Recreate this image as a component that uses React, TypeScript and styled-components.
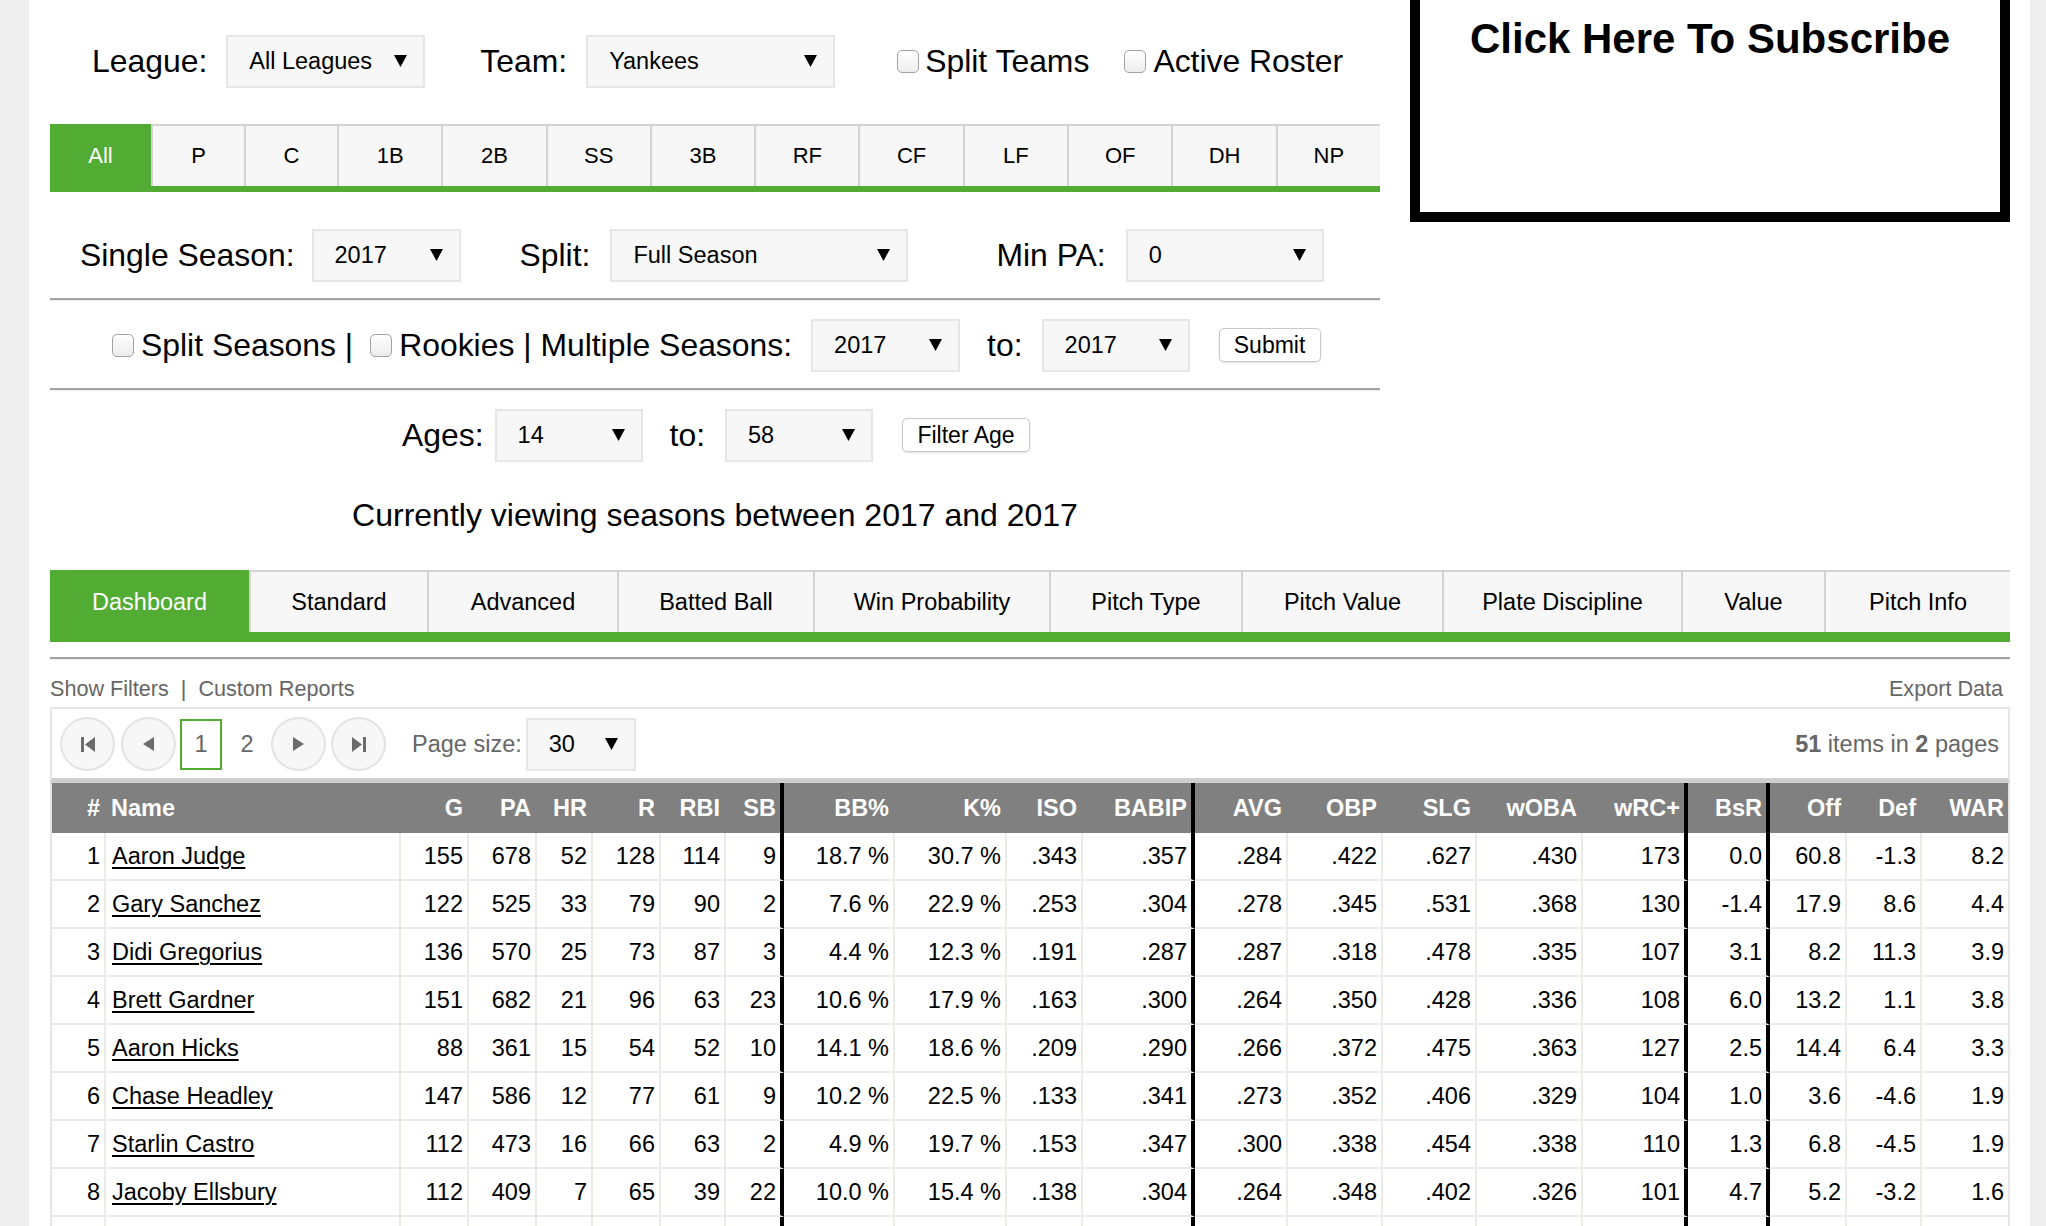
import React from 'react';
import styled, { createGlobalStyle } from 'styled-components';

const GREEN = '#52ab33';

const GlobalStyle = createGlobalStyle`
  html, body { margin: 0; padding: 0; background: #efefef; overflow: hidden; }
  body { font-family: "Liberation Sans", Arial, Helvetica, sans-serif; color: #000; }
  * { box-sizing: border-box; }
`;

const Page = styled.div`
  margin-left: 29px;
  width: 2001px;
  height: 1226px;
  overflow: hidden;
  background: #fff;
  padding: 0 20px 0 21px;
`;

const Top = styled.div`
  display: flex;
  align-items: flex-start;
  gap: 30px;
`;

const FilterColumn = styled.div`
  width: 1330px;
  display: flex;
  flex-direction: column;
`;

const FieldRow = styled.div<{ $mt: number; $pl: number }>`
  display: flex;
  align-items: center;
  height: 54px;
  margin-top: ${p => p.$mt}px;
  padding-left: ${p => p.$pl}px;
`;

const Label = styled.span<{ $ml?: number }>`
  font-size: 31.9px;
  line-height: 1.15;
  white-space: nowrap;
  margin-left: ${p => p.$ml ?? 0}px;
`;

const SelectBox = styled.div<{ $w: number; $ml?: number }>`
  flex-shrink: 0;
  width: ${p => p.$w}px;
  height: 53px;
  margin-left: ${p => p.$ml ?? 0}px;
  border: 2px solid #e6e6e6;
  background: #f7f7f7;
  display: flex;
  align-items: center;
  justify-content: space-between;
  padding: 0 16px 0 21px;
  font-size: 23.5px;
  color: #000;
  white-space: nowrap;
`;

const CheckBox = styled.span<{ $ml?: number }>`
  flex-shrink: 0;
  display: inline-block;
  width: 22px;
  height: 23px;
  margin-left: ${p => p.$ml ?? 0}px;
  border: 1px solid #a3a3a3;
  border-radius: 5px;
  background: linear-gradient(#ffffff, #ececec);
`;

const Button = styled.button<{ $w: number; $ml?: number }>`
  flex-shrink: 0;
  width: ${p => p.$w}px;
  height: 34px;
  margin-left: ${p => p.$ml ?? 0}px;
  padding: 0;
  background: #fff;
  border: 1px solid #c9c9c9;
  border-radius: 5px;
  box-shadow: 0 1px 2px rgba(0, 0, 0, 0.12);
  font-family: inherit;
  font-size: 23px;
  color: #000;
`;

const Rule = styled.div<{ $mt: number }>`
  margin-top: ${p => p.$mt}px;
  height: 3px;
  border-top: 2px solid #a2a2a2;
  border-bottom: 1px solid #ececec;
`;

const ViewingText = styled.div`
  margin-top: 33px;
  height: 40px;
  line-height: 40px;
  text-align: center;
  font-size: 32px;
`;

const SubscribeBox = styled.a`
  flex-shrink: 0;
  width: 600px;
  height: 222px;
  border: 10px solid #000;
  border-top: 0;
  padding-top: 18px;
  display: flex;
  justify-content: center;
  font-size: 42px;
  line-height: 42px;
  font-weight: bold;
  color: #000;
  text-decoration: none;
`;

const PosTabBar = styled.nav`
  display: flex;
  margin-top: 36px;
  height: 68px;
  border-bottom: 6px solid ${GREEN};
  background: #f7f7f7;
`;

const PosTab = styled.a<{ $active?: boolean; $w?: number }>`
  flex: ${p => (p.$w ? `0 0 ${p.$w}px` : '1 1 0')};
  display: flex;
  align-items: center;
  justify-content: center;
  border-top: 2px solid ${p => (p.$active ? GREEN : '#d3d3d3')};
  border-left: 2px solid #d3d3d3;
  &:first-child { border-left: 0; }
  background: ${p => (p.$active ? GREEN : '#f7f7f7')};
  color: ${p => (p.$active ? '#fff' : '#000')};
  font-size: 22px;
  text-decoration: none;
`;

const StatTabBar = styled.nav`
  display: flex;
  margin-top: 35px;
  height: 72px;
  border-bottom: 10px solid ${GREEN};
  background: #f7f7f7;
`;

const StatTab = styled.a<{ $active?: boolean; $w: number }>`
  flex: 0 0 ${p => p.$w}px;
  display: flex;
  align-items: center;
  justify-content: center;
  border-top: 2px solid ${p => (p.$active ? GREEN : '#d3d3d3')};
  border-left: 2px solid #d3d3d3;
  &:first-child { border-left: 0; }
  background: ${p => (p.$active ? GREEN : '#f7f7f7')};
  color: ${p => (p.$active ? '#fff' : '#000')};
  font-size: 23.5px;
  text-decoration: none;
  white-space: nowrap;
`;

const ToolsRow = styled.div`
  margin-top: 17px;
  display: flex;
  justify-content: space-between;
  padding-right: 7px;
  font-size: 21.6px;
  line-height: 24px;
  color: #666;
`;

const ToolGroup = styled.div`
  display: flex;
`;

const ToolLink = styled.a`
  color: #666;
  text-decoration: none;
`;

const ToolSep = styled.span`
  margin: 0 12px;
`;

const PagerBar = styled.div`
  margin-top: 6px;
  border: 2px solid #e6e6e6;
  border-bottom: 5px solid #cfcfcf;
  padding: 8px 9px 7px 8px;
  display: flex;
  align-items: center;
  justify-content: space-between;
`;

const PagerGroup = styled.div`
  display: flex;
  align-items: center;
`;

const CircleButton = styled.a<{ $ml?: number }>`
  flex-shrink: 0;
  width: 55px;
  height: 54px;
  margin-left: ${p => p.$ml ?? 0}px;
  border: 2px solid #e3e3e3;
  border-radius: 50%;
  background: #f7f7f7;
  display: flex;
  align-items: center;
  justify-content: center;
`;

const PageNum = styled.a<{ $active?: boolean; $ml?: number }>`
  flex-shrink: 0;
  width: 42px;
  height: 51px;
  margin-left: ${p => p.$ml ?? 0}px;
  border: 2px solid ${p => (p.$active ? GREEN : 'transparent')};
  display: flex;
  align-items: center;
  justify-content: center;
  font-size: 23.5px;
  color: #666;
  text-decoration: none;
`;

const PagerText = styled.span<{ $ml?: number }>`
  margin-left: ${p => p.$ml ?? 0}px;
  font-size: 23.5px;
  color: #666;
  white-space: nowrap;
`;

const DataTable = styled.div`
  border-left: 2px solid #e6e6e6;
  border-right: 2px solid #e6e6e6;
`;

type Col = { key: string; w: number; thick?: boolean; last?: boolean; align?: 'left' | 'right' };

const COLS: Col[] = [
  { key: '#', w: 54 },
  { key: 'Name', w: 295, align: 'left' },
  { key: 'G', w: 68 },
  { key: 'PA', w: 68 },
  { key: 'HR', w: 56 },
  { key: 'R', w: 68 },
  { key: 'RBI', w: 65 },
  { key: 'SB', w: 58, thick: true },
  { key: 'BB%', w: 111 },
  { key: 'K%', w: 112 },
  { key: 'ISO', w: 76 },
  { key: 'BABIP', w: 112, thick: true },
  { key: 'AVG', w: 93 },
  { key: 'OBP', w: 95 },
  { key: 'SLG', w: 94 },
  { key: 'wOBA', w: 106 },
  { key: 'wRC+', w: 105, thick: true },
  { key: 'BsR', w: 82, thick: true },
  { key: 'Off', w: 77 },
  { key: 'Def', w: 75 },
  { key: 'WAR', w: 86, last: true },
];

const GridRow = styled.div`
  display: grid;
  grid-template-columns: ${COLS.map(c => `${c.w}px`).join(' ')};
`;

const HeadCell = styled.div<{ $thick?: boolean; $last?: boolean; $align?: string }>`
  height: 50px;
  line-height: 50px;
  background: #808080;
  color: #fff;
  font-weight: bold;
  font-size: 23.5px;
  white-space: nowrap;
  text-align: ${p => p.$align ?? 'right'};
  padding: 0 4px 0 5px;
  border-right: ${p => (p.$last ? '0' : p.$thick ? '4px solid #000' : '2px solid transparent')};
`;

const Cell = styled.div<{ $thick?: boolean; $last?: boolean; $align?: string }>`
  height: 48px;
  line-height: 47px;
  font-size: 23.5px;
  white-space: nowrap;
  overflow: hidden;
  text-align: ${p => p.$align ?? 'right'};
  padding: 0 4px 0 6px;
  border-bottom: 2px solid #ebebe5;
  border-right: ${p => (p.$last ? '0' : p.$thick ? '4px solid #000' : '2px solid #ebebe5')};
  background: #fff;
`;

const PlayerLink = styled.a`
  color: #000;
  text-decoration: underline;
  text-decoration-thickness: 2px;
  text-underline-offset: 3px;
`;

const Caret = () => (
  <svg width="13" height="12" viewBox="0 0 13 12">
    <polygon points="0,0 13,0 6.5,12" fill="#000" />
  </svg>
);

type PagerIconKind = 'first' | 'prev' | 'next' | 'last';
const PagerIcon = ({ kind }: { kind: PagerIconKind }) => {
  const c = '#6b6b6b';
  if (kind === 'first')
    return (
      <svg width="14" height="15" viewBox="0 0 14 15">
        <rect x="0" y="0" width="3" height="15" fill={c} />
        <polygon points="14,0 14,15 4,7.5" fill={c} />
      </svg>
    );
  if (kind === 'prev')
    return (
      <svg width="11" height="14" viewBox="0 0 11 14">
        <polygon points="11,0 11,14 0,7" fill={c} />
      </svg>
    );
  if (kind === 'next')
    return (
      <svg width="11" height="14" viewBox="0 0 11 14">
        <polygon points="0,0 0,14 11,7" fill={c} />
      </svg>
    );
  return (
    <svg width="14" height="15" viewBox="0 0 14 15">
      <polygon points="0,0 0,15 10,7.5" fill={c} />
      <rect x="11" y="0" width="3" height="15" fill={c} />
    </svg>
  );
};

const Select = ({ value, w, ml }: { value: string; w: number; ml?: number }) => (
  <SelectBox $w={w} $ml={ml}>
    <span>{value}</span>
    <Caret />
  </SelectBox>
);

type Row = (string | number)[];
const ROWS: Row[] = [
  [1, 'Aaron Judge', 155, 678, 52, 128, 114, 9, '18.7 %', '30.7 %', '.343', '.357', '.284', '.422', '.627', '.430', 173, '0.0', '60.8', '-1.3', '8.2'],
  [2, 'Gary Sanchez', 122, 525, 33, 79, 90, 2, '7.6 %', '22.9 %', '.253', '.304', '.278', '.345', '.531', '.368', 130, '-1.4', '17.9', '8.6', '4.4'],
  [3, 'Didi Gregorius', 136, 570, 25, 73, 87, 3, '4.4 %', '12.3 %', '.191', '.287', '.287', '.318', '.478', '.335', 107, '3.1', '8.2', '11.3', '3.9'],
  [4, 'Brett Gardner', 151, 682, 21, 96, 63, 23, '10.6 %', '17.9 %', '.163', '.300', '.264', '.350', '.428', '.336', 108, '6.0', '13.2', '1.1', '3.8'],
  [5, 'Aaron Hicks', 88, 361, 15, 54, 52, 10, '14.1 %', '18.6 %', '.209', '.290', '.266', '.372', '.475', '.363', 127, '2.5', '14.4', '6.4', '3.3'],
  [6, 'Chase Headley', 147, 586, 12, 77, 61, 9, '10.2 %', '22.5 %', '.133', '.341', '.273', '.352', '.406', '.329', 104, '1.0', '3.6', '-4.6', '1.9'],
  [7, 'Starlin Castro', 112, 473, 16, 66, 63, 2, '4.9 %', '19.7 %', '.153', '.347', '.300', '.338', '.454', '.338', 110, '1.3', '6.8', '-4.5', '1.9'],
  [8, 'Jacoby Ellsbury', 112, 409, 7, 65, 39, 22, '10.0 %', '15.4 %', '.138', '.304', '.264', '.348', '.402', '.326', 101, '4.7', '5.2', '-3.2', '1.6'],
  COLS.map(() => ''),
];

const POSITIONS = ['All', 'P', 'C', '1B', '2B', 'SS', '3B', 'RF', 'CF', 'LF', 'OF', 'DH', 'NP'];
const POS_WIDTHS: Record<string, number> = { All: 101, P: 93, C: 93 };

const STAT_TABS: [string, number][] = [
  ['Dashboard', 199],
  ['Standard', 178],
  ['Advanced', 190],
  ['Batted Ball', 196],
  ['Win Probability', 236],
  ['Pitch Type', 192],
  ['Pitch Value', 201],
  ['Plate Discipline', 239],
  ['Value', 143],
  ['Pitch Info', 186],
];

export default function App() {
  return (
    <>
      <GlobalStyle />
      <Page>
        <Top>
          <FilterColumn>
            <FieldRow $mt={34} $pl={42}>
              <Label>League:</Label>
              <Select value="All Leagues" w={199} ml={19} />
              <Label $ml={55}>Team:</Label>
              <Select value="Yankees" w={249} ml={19} />
              <CheckBox $ml={62} />
              <Label $ml={6}>Split Teams</Label>
              <CheckBox $ml={35} />
              <Label $ml={7}>Active Roster</Label>
            </FieldRow>

            <PosTabBar>
              {POSITIONS.map(p => (
                <PosTab key={p} href="#" $active={p === 'All'} $w={POS_WIDTHS[p]}>
                  {p}
                </PosTab>
              ))}
            </PosTabBar>

            <FieldRow $mt={36} $pl={30}>
              <Label>Single Season:</Label>
              <Select value="2017" w={149} ml={17} />
              <Label $ml={59}>Split:</Label>
              <Select value="Full Season" w={298} ml={20} />
              <Label $ml={88}>Min PA:</Label>
              <Select value="0" w={198} ml={20} />
            </FieldRow>

            <Rule $mt={16} />

            <FieldRow $mt={17} $pl={62}>
              <CheckBox />
              <Label $ml={7}>Split Seasons |</Label>
              <CheckBox $ml={17} />
              <Label $ml={7}>Rookies | Multiple Seasons:</Label>
              <Select value="2017" w={149} ml={19} />
              <Label $ml={27}>to:</Label>
              <Select value="2017" w={148} ml={19} />
              <Button $w={102} $ml={29}>Submit</Button>
            </FieldRow>

            <Rule $mt={16} />

            <FieldRow $mt={17} $pl={352}>
              <Label>Ages:</Label>
              <Select value="14" w={148} ml={11} />
              <Label $ml={27}>to:</Label>
              <Select value="58" w={148} ml={20} />
              <Button $w={128} $ml={29}>Filter Age</Button>
            </FieldRow>

            <ViewingText>Currently viewing seasons between 2017 and 2017</ViewingText>
          </FilterColumn>

          <SubscribeBox href="#">Click Here To Subscribe</SubscribeBox>
        </Top>

        <StatTabBar>
          {STAT_TABS.map(([t, w]) => (
            <StatTab key={t} href="#" $w={w} $active={t === 'Dashboard'}>
              {t}
            </StatTab>
          ))}
        </StatTabBar>

        <Rule $mt={15} />

        <ToolsRow>
          <ToolGroup>
            <ToolLink href="#">Show Filters</ToolLink>
            <ToolSep>|</ToolSep>
            <ToolLink href="#">Custom Reports</ToolLink>
          </ToolGroup>
          <ToolLink href="#">Export Data</ToolLink>
        </ToolsRow>

        <PagerBar>
          <PagerGroup>
            <CircleButton href="#"><PagerIcon kind="first" /></CircleButton>
            <CircleButton href="#" $ml={6}><PagerIcon kind="prev" /></CircleButton>
            <PageNum $active $ml={4}>1</PageNum>
            <PageNum href="#" $ml={4}>2</PageNum>
            <CircleButton href="#" $ml={3}><PagerIcon kind="next" /></CircleButton>
            <CircleButton href="#" $ml={5}><PagerIcon kind="last" /></CircleButton>
            <PagerText $ml={26}>Page size:</PagerText>
            <Select value="30" w={110} ml={4} />
          </PagerGroup>
          <PagerText>
            <b>51</b> items in <b>2</b> pages
          </PagerText>
        </PagerBar>

        <DataTable>
          <GridRow>
            {COLS.map(c => (
              <HeadCell key={c.key} $thick={c.thick} $last={c.last} $align={c.align}>
                {c.key}
              </HeadCell>
            ))}
          </GridRow>
          {ROWS.map((r, i) => (
            <GridRow key={i}>
              {COLS.map((c, j) => (
                <Cell key={c.key} $thick={c.thick} $last={c.last} $align={c.align}>
                  {j === 1 && r[j] ? <PlayerLink href="#">{r[j]}</PlayerLink> : r[j]}
                </Cell>
              ))}
            </GridRow>
          ))}
        </DataTable>
      </Page>
    </>
  );
}
